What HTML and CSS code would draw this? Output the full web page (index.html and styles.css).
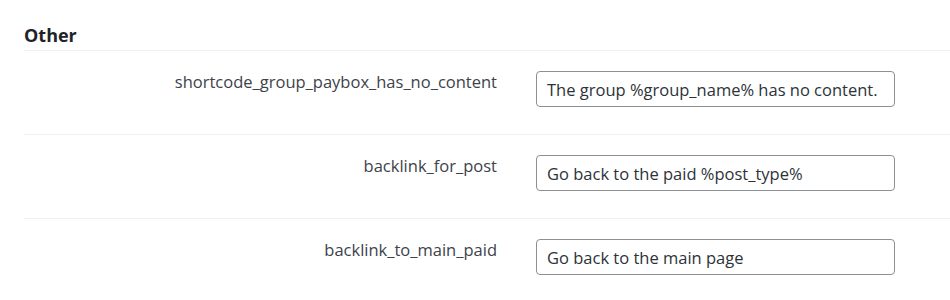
FILE: index.html
```html
<!DOCTYPE html>
<html lang="en">
<head>
    <meta charset="UTF-8">
    <meta name="viewport" content="width=device-width, initial-scale=1.0">
    <title>Settings - Other</title>
    <link rel="stylesheet" href="styles.css">
</head>
<body>

    <div class="section">
        <h2 class="section-title">Other</h2>

        <div class="form-row">
            <label class="form-label" for="shortcode_group_paybox_has_no_content">shortcode_group_paybox_has_no_content</label>
            <div class="form-field">
                <input type="text" id="shortcode_group_paybox_has_no_content" class="text-input" value="The group %group_name% has no content.">
            </div>
        </div>

        <div class="form-row">
            <label class="form-label" for="backlink_for_post">backlink_for_post</label>
            <div class="form-field">
                <input type="text" id="backlink_for_post" class="text-input" value="Go back to the paid %post_type%">
            </div>
        </div>

        <div class="form-row">
            <label class="form-label" for="backlink_to_main_paid">backlink_to_main_paid</label>
            <div class="form-field">
                <input type="text" id="backlink_to_main_paid" class="text-input" value="Go back to the main page">
            </div>
        </div>
    </div>

</body>
</html>
```

FILE: styles.css
```css
body {
    font-family: "Open Sans", "Noto Sans", sans-serif;
    background-color: #ffffff;
    color: #3c434a;
    margin: 0;
    padding: 0 0 0 24px;
}

.section-title {
    font-size: 18px;
    font-weight: 700;
    color: #1d2327;
    margin: 0;
    padding: 25px 0 4px;
    line-height: 21px;
    border-bottom: 1px solid #f0f0f1;
}

/* each setting row */
.form-row {
    display: flex;
    align-items: flex-start;
    gap: 39px;
    padding: 20px 0 27px;
    border-bottom: 1px solid #f0f0f1;
}

.form-label {
    width: 473px;
    text-align: right;
    font-size: 16.5px;
    line-height: 22px;
    color: #3c434a;
}

.text-input {
    box-sizing: border-box;
    width: 359px;
    height: 36px;
    padding: 0 10px;
    border: 1px solid #8c8f94;
    border-radius: 4px;
    font-family: inherit;
    font-size: 16.5px;
    color: #2c3338;
    background: #fff;
}
```
